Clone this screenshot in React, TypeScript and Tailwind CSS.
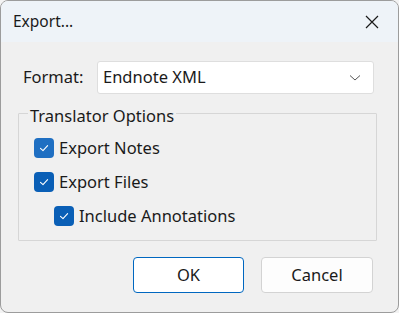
import React from 'react'

const font = { fontFamily: '"Noto Sans", "Open Sans", sans-serif' }

function Check({ light }: { light?: boolean }) {
  return (
    <span
      className={`flex h-[20px] w-[20px] shrink-0 items-center justify-center rounded-[4px] ${
        light ? 'bg-[#1f6fc2]' : 'bg-[#0a5fb6]'
      }`}
    >
      <svg width="12" height="12" viewBox="0 0 12 12" fill="none">
        <path d="M2.5 6.3 L5 8.6 L9.6 3.6" stroke="white" strokeWidth="1.1" strokeLinecap="round" strokeLinejoin="round" />
      </svg>
    </span>
  )
}

export default function App() {
  return (
    <div className="h-[313px] w-[399px] bg-[#f3f3f3]" style={font}>
      <div className="flex h-full w-full flex-col overflow-hidden rounded-[8px] border border-[#9c9c9c] bg-[#f0f0f0] text-[#1a1a1a]">
        {/* title bar */}
        <div className="flex h-[41px] shrink-0 items-center justify-between bg-[#eef3f8] pl-[12px] pr-[18px]">
          <span className="text-[15.5px]">Export...</span>
          <svg width="16" height="16" viewBox="0 0 16 16">
            <path d="M2 2 L14 14 M14 2 L2 14" stroke="#1a1a1a" strokeWidth="1.2" />
          </svg>
        </div>

        {/* body */}
        <div className="flex flex-1 flex-col px-[17px] pt-[19px]">
          <div className="flex items-center">
            <span className="w-[79px] pl-[5px] text-[16.5px]">Format:</span>
            <div className="flex h-[33px] w-[277px] items-center justify-between rounded-[3px] border border-[#dedede] bg-white pl-[5px] pr-[12px]">
              <span className="text-[16.5px]">Endnote XML</span>
              <svg width="12" height="8" viewBox="0 0 12 8">
                <path d="M1 1.5 L6 6 L11 1.5" stroke="#555" strokeWidth="1" fill="none" />
              </svg>
            </div>
          </div>

          <fieldset className="mt-[6px] w-[359px] rounded-[1px] border border-[#d6d6d6] px-0 pb-[14px]">
            <legend className="ml-[9px] px-[2px] pt-[6px] text-[16.5px] leading-[20px]">Translator Options</legend>
            <div className="flex flex-col gap-[14px] px-[15px] pt-[12px]">
              <div className="flex items-center gap-[5px]">
                <Check light />
                <span className="text-[16.5px] leading-[20px]">Export Notes</span>
              </div>
              <div className="flex items-center gap-[5px]">
                <Check />
                <span className="text-[16.5px] leading-[20px]">Export Files</span>
              </div>
              <div className="flex items-center gap-[5px] pl-[20px]">
                <Check />
                <span className="text-[16.5px] leading-[20px]">Include Annotations</span>
              </div>
            </div>
          </fieldset>

          <div className="mt-[16px] flex justify-end gap-[17px] pr-[8px]">
            <button className="h-[36px] w-[111px] rounded-[4px] border border-[#0067c0] bg-white text-[16.5px]">OK</button>
            <button className="h-[36px] w-[112px] rounded-[4px] border border-[#d3d3d3] bg-[#fdfdfd] text-[16.5px]">Cancel</button>
          </div>
        </div>
      </div>
    </div>
  )
}
